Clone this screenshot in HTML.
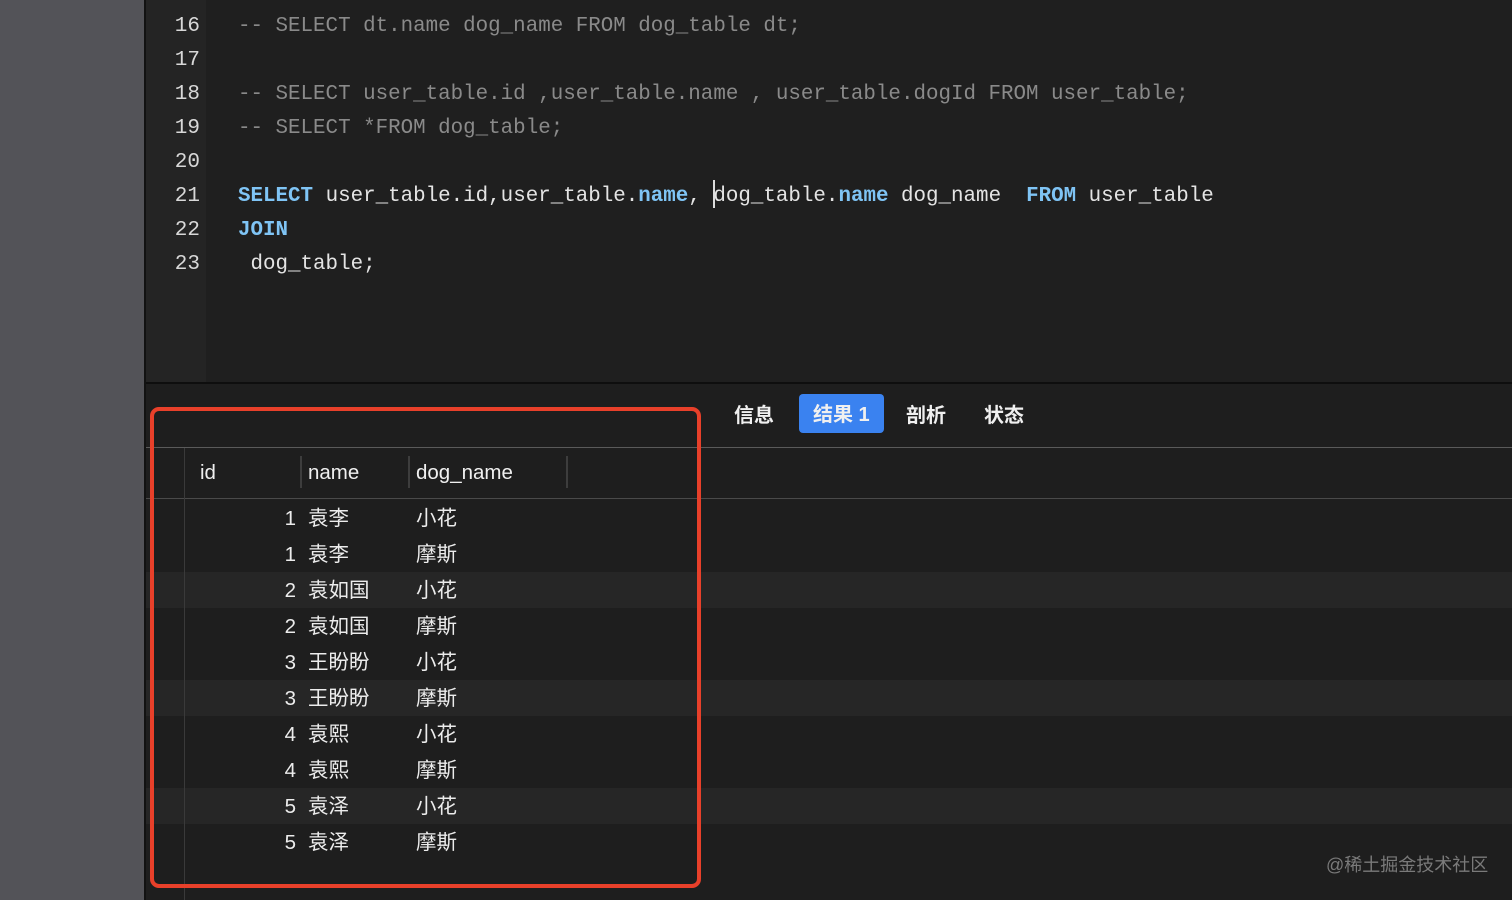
<!DOCTYPE html>
<html><head><meta charset="utf-8"><style>
*{margin:0;padding:0;box-sizing:border-box}
body{width:1512px;height:900px;overflow:hidden;background:#1e1e1e;position:relative;font-family:"Liberation Sans","Noto Sans CJK SC",sans-serif}
.side{position:absolute;left:0;top:0;width:144px;height:900px;background:#535358}
.sep{position:absolute;left:144px;top:0;width:2px;height:900px;background:#121212}
.editor{position:absolute;left:146px;top:0;width:1366px;height:382px;background:#1f1f1f}
.gut{position:absolute;left:0;top:0;width:60px;height:382px;background:#242424}
.ln{position:absolute;left:0;width:54px;text-align:right;font:21px "Liberation Mono",monospace;color:#d8d8d8;line-height:34px}
.code{position:absolute;left:92px;font:20.85px "Liberation Mono",monospace;color:#e4e4e4;line-height:34px;white-space:pre}
.c{color:#8a8a8a}.k{color:#7fc4f5;font-weight:bold}
.cur{display:inline-block;width:0;border-left:2px solid #ddd;height:28px;vertical-align:-7px;margin-right:-2px}
.hline{position:absolute;left:146px;top:382px;width:1366px;height:2px;background:#0e0e0e}
.tabs{position:absolute;top:396px;font-size:20px;color:#f0f0f0;font-weight:bold}
.tab{position:absolute;top:0;height:37px;line-height:40px;white-space:nowrap}
.act{background:#3a82f0;border-radius:4px;padding:0 14px;top:-2px;height:39px;line-height:43px}
.line{position:absolute;left:146px;width:1366px;height:1px;background:#4a4a4a}
.row{position:absolute;left:146px;width:1366px;height:36px;line-height:38px;font-size:20.5px;color:#ececec}
.stripe{background:#262626}
.id{position:absolute;left:0;width:150px;text-align:right}
.nm{position:absolute;left:162px}.dg{position:absolute;left:270px}
.vl{position:absolute;top:448px;width:1px;height:452px;background:#3a3a3a;left:184px}
.hd{position:absolute;top:448px;height:50px;line-height:50px;font-size:20.5px;color:#f0f0f0}
.hsep{position:absolute;top:456px;width:2px;height:32px;background:#3d3d3d}
.red{position:absolute;left:150px;top:407px;width:551px;height:481px;border:4px solid #e8402a;border-radius:9px}
.wm{position:absolute;left:1326px;top:851px;font-size:18px;color:#7a7a7a}
</style></head><body>
<div class="side"></div><div class="sep"></div>
<div class="editor"><div class="gut"></div>
<div class="ln" style="top:10px">16<br>17<br>18<br>19<br>20<br>21<br>22<br>23</div>
<div class="code" style="top:10px"><span class="c">-- SELECT dt.name dog_name FROM dog_table dt;</span>

<span class="c">-- SELECT user_table.id ,user_table.name , user_table.dogId FROM user_table;</span>
<span class="c">-- SELECT *FROM dog_table;</span>

<span class="k">SELECT</span> user_table.id,user_table.<span class="k">name</span>, <span class="cur"></span>dog_table.<span class="k">name</span> dog_name  <span class="k">FROM</span> user_table
<span class="k">JOIN</span>
 dog_table;</div>
</div>
<div class="hline"></div>
<div class="tabs">
<div class="tab" style="left:734px">信息</div>
<div class="tab act" style="left:799px">结果 1</div>
<div class="tab" style="left:906px">剖析</div>
<div class="tab" style="left:984px">状态</div>
</div>
<div class="line" style="top:447px;background:#5a5a5a"></div>
<div class="line" style="top:498px;background:#4a4a4a"></div>
<div class="hd" style="left:200px">id</div>
<div class="hsep" style="left:300px"></div>
<div class="hd" style="left:308px">name</div>
<div class="hsep" style="left:408px"></div>
<div class="hd" style="left:416px">dog_name</div>
<div class="hsep" style="left:566px"></div>
<div class="row" style="top:500px"><span class="id">1</span><span class="nm">袁李</span><span class="dg">小花</span></div>
<div class="row" style="top:536px"><span class="id">1</span><span class="nm">袁李</span><span class="dg">摩斯</span></div>
<div class="row stripe" style="top:572px"><span class="id">2</span><span class="nm">袁如国</span><span class="dg">小花</span></div>
<div class="row" style="top:608px"><span class="id">2</span><span class="nm">袁如国</span><span class="dg">摩斯</span></div>
<div class="row" style="top:644px"><span class="id">3</span><span class="nm">王盼盼</span><span class="dg">小花</span></div>
<div class="row stripe" style="top:680px"><span class="id">3</span><span class="nm">王盼盼</span><span class="dg">摩斯</span></div>
<div class="row" style="top:716px"><span class="id">4</span><span class="nm">袁熙</span><span class="dg">小花</span></div>
<div class="row" style="top:752px"><span class="id">4</span><span class="nm">袁熙</span><span class="dg">摩斯</span></div>
<div class="row stripe" style="top:788px"><span class="id">5</span><span class="nm">袁泽</span><span class="dg">小花</span></div>
<div class="row" style="top:824px"><span class="id">5</span><span class="nm">袁泽</span><span class="dg">摩斯</span></div>
<div class="vl"></div>
<div class="red"></div>
<div class="wm">@稀土掘金技术社区</div>
</body></html>
